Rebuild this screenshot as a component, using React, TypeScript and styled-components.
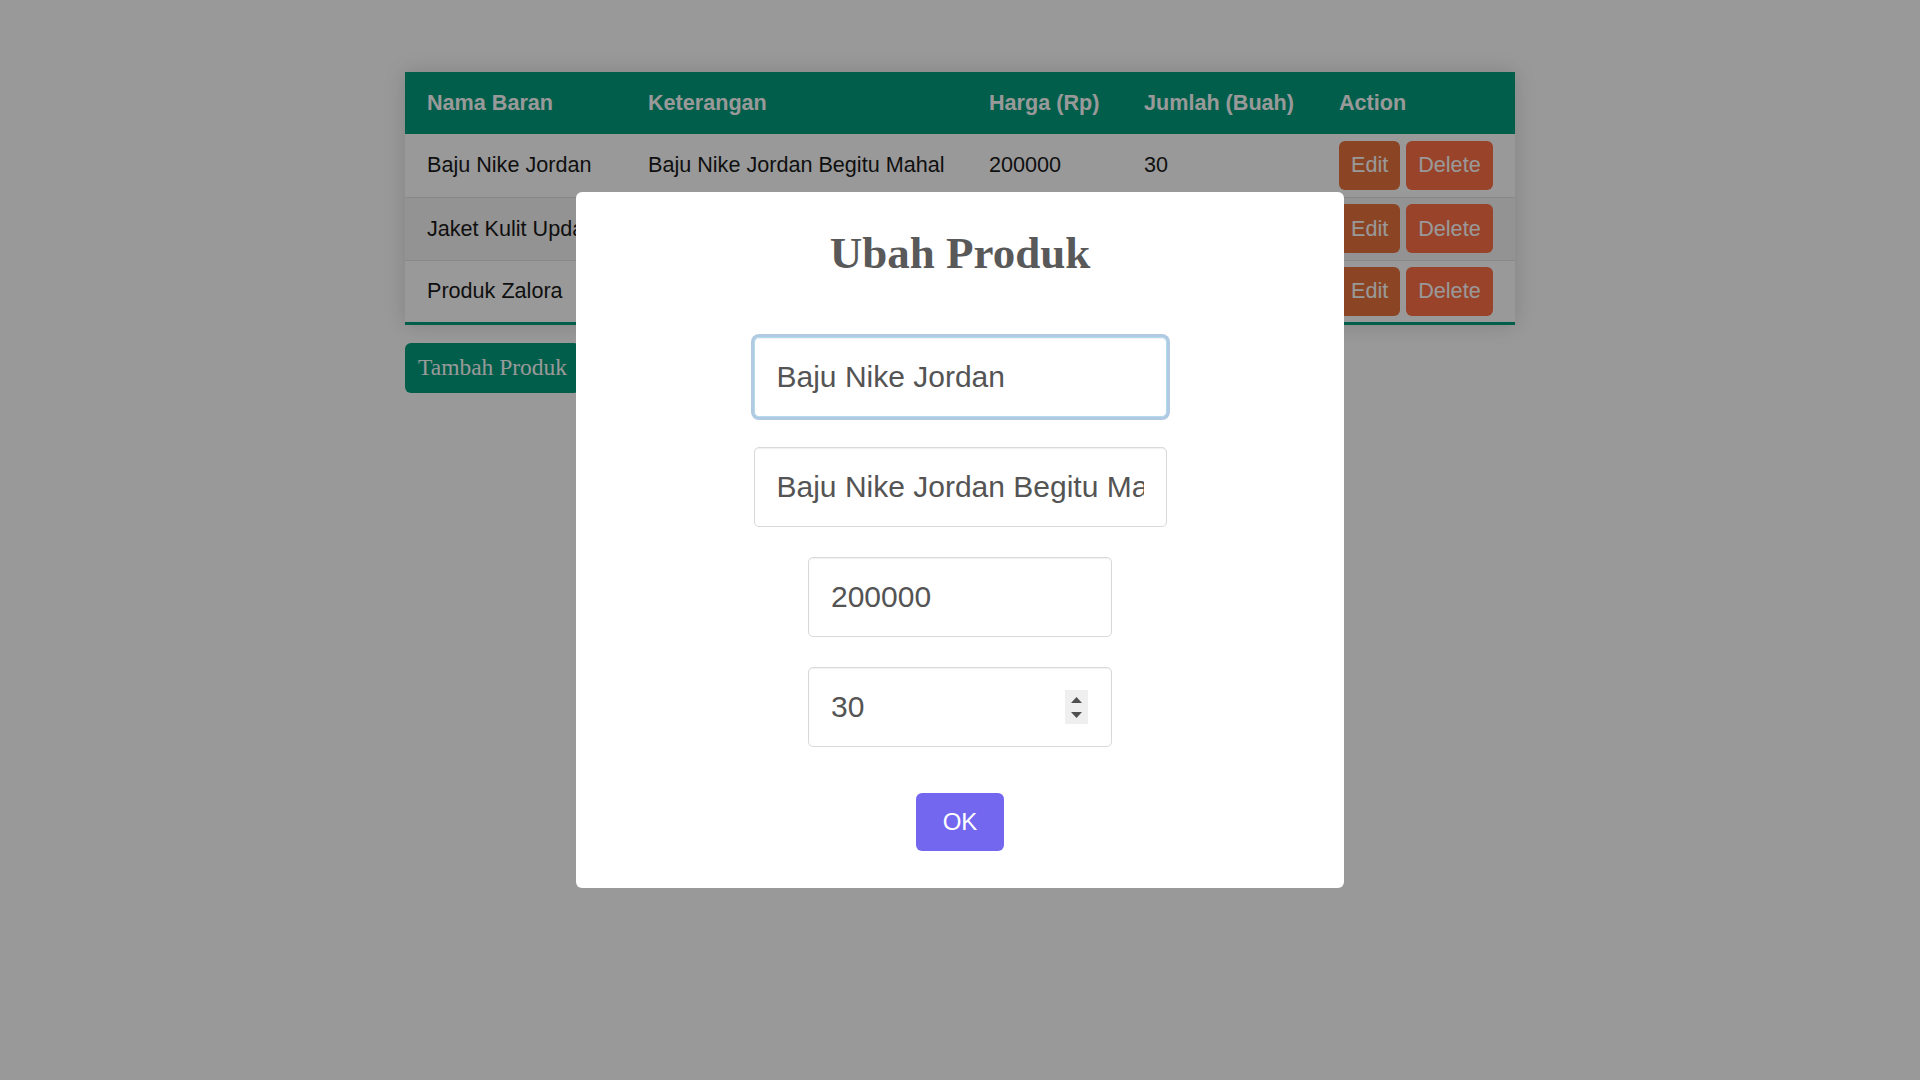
import React from "react";
import styled, { createGlobalStyle } from "styled-components";

const GlobalStyle = createGlobalStyle`
  html, body { margin: 0; padding: 0; background: #ffffff; }
  body { font-family: "Liberation Sans", Arial, sans-serif; }
  * { box-sizing: border-box; }
`;

const Page = styled.div`
  width: 1110px;
  margin: 0 auto;
  padding-top: 72px;
  display: flex;
  flex-direction: column;
  align-items: flex-start;
  gap: 18px;
`;

const Table = styled.table`
  width: 1110px;
  table-layout: fixed;
  border-collapse: collapse;
  box-shadow: 0 0 20px rgba(0, 0, 0, 0.15);
  border-bottom: 3px solid #009d7d;
  font-size: 21.6px;
`;

const HeadCell = styled.th`
  height: 62px;
  padding: 0 22px;
  background: #009d7d;
  color: #ffffff;
  font-weight: bold;
  text-align: left;
`;

const Row = styled.tr<{ $striped?: boolean }>`
  background: ${(p) => (p.$striped ? "#f5f5f5" : "#ffffff")};
  border-bottom: 1px solid #e3e3e3;
  &:last-child { border-bottom: none; }
`;

const Cell = styled.td`
  height: 63px;
  padding: 0 22px;
  color: #1a1a1a;
  white-space: nowrap;
  overflow: hidden;
`;

const Actions = styled.div`
  display: flex;
  gap: 6px;
`;

const ActionButton = styled.button<{ $tone: "edit" | "delete" }>`
  height: 49px;
  padding: 0 12px;
  border: none;
  border-radius: 6px;
  background: ${(p) => (p.$tone === "edit" ? "#e8733f" : "#ff7146")};
  color: #ffffff;
  font-family: "Liberation Sans", Arial, sans-serif;
  font-size: 21.6px;
`;

const AddButton = styled.button`
  height: 50px;
  padding: 0 13px;
  border: none;
  border-radius: 6px;
  background: #009d7d;
  color: #ffffff;
  font-family: "Liberation Serif", "Times New Roman", serif;
  font-size: 23.5px;
`;

const Overlay = styled.div`
  position: fixed;
  inset: 0;
  background: rgba(0, 0, 0, 0.4);
  display: flex;
  align-items: center;
  justify-content: center;
`;

const Modal = styled.div`
  width: 768px;
  background: #ffffff;
  border-radius: 6px;
  padding: 34px 0 37px;
  display: flex;
  flex-direction: column;
  align-items: center;
`;

const Title = styled.h2`
  margin: 0 0 57px;
  font-family: "Liberation Serif", "Times New Roman", serif;
  font-weight: bold;
  font-size: 45px;
  line-height: 54px;
  color: #595959;
`;

const Fields = styled.div`
  display: flex;
  flex-direction: column;
  align-items: center;
  gap: 30px;
`;

const FieldWrap = styled.div`
  position: relative;
`;

const Field = styled.input<{ $wide?: boolean; $focused?: boolean }>`
  display: block;
  width: ${(p) => (p.$wide ? "413px" : "304px")};
  height: 80px;
  padding: 0 22px;
  border: 1px solid ${(p) => (p.$focused ? "#b4dbed" : "#d9d9d9")};
  border-radius: 5px;
  box-shadow: ${(p) =>
    p.$focused
      ? "inset 0 1px 1px rgba(0,0,0,0.06), 0 0 0 3px rgba(100,150,200,0.5)"
      : "inset 0 1px 1px rgba(0,0,0,0.06)"};
  outline: none;
  background: #ffffff;
  color: #545454;
  font-family: "Liberation Sans", Arial, sans-serif;
  font-size: 30px;
`;

const Spinner = styled.div`
  position: absolute;
  top: 23px;
  right: 24px;
  width: 23px;
  height: 34px;
  background: #efefef;
  display: flex;
  flex-direction: column;
  align-items: center;
  justify-content: center;
  gap: 9px;
`;

const OkButton = styled.button`
  margin-top: 46px;
  height: 58px;
  width: 88px;
  border: none;
  border-radius: 6px;
  background: #7367f0;
  color: #ffffff;
  font-family: "Liberation Sans", Arial, sans-serif;
  font-size: 24px;
`;

const rows = [
  { nama: "Baju Nike Jordan", ket: "Baju Nike Jordan Begitu Mahal", harga: "200000", jumlah: "30" },
  { nama: "Jaket Kulit Update", ket: "Jaket Kulit Asli", harga: "350000", jumlah: "15" },
  { nama: "Produk Zalora", ket: "Produk Zalora Terbaru", harga: "150000", jumlah: "20" },
];

const widths = [221, 341, 155, 195, 198];

export default function App() {
  return (
    <>
      <GlobalStyle />
      <Page>
        <Table>
          <colgroup>
            {widths.map((w, i) => (
              <col key={i} style={{ width: w }} />
            ))}
          </colgroup>
          <thead>
            <tr>
              <HeadCell>Nama Baran</HeadCell>
              <HeadCell>Keterangan</HeadCell>
              <HeadCell>Harga (Rp)</HeadCell>
              <HeadCell>Jumlah (Buah)</HeadCell>
              <HeadCell>Action</HeadCell>
            </tr>
          </thead>
          <tbody>
            {rows.map((r, i) => (
              <Row key={i} $striped={i === 1}>
                <Cell>{r.nama}</Cell>
                <Cell>{r.ket}</Cell>
                <Cell>{r.harga}</Cell>
                <Cell>{r.jumlah}</Cell>
                <Cell>
                  <Actions>
                    <ActionButton $tone="edit">Edit</ActionButton>
                    <ActionButton $tone="delete">Delete</ActionButton>
                  </Actions>
                </Cell>
              </Row>
            ))}
          </tbody>
        </Table>
        <AddButton>Tambah Produk</AddButton>
      </Page>
      <Overlay>
        <Modal>
          <Title>Ubah Produk</Title>
          <Fields>
            <Field $wide $focused readOnly defaultValue="Baju Nike Jordan" />
            <Field $wide readOnly defaultValue="Baju Nike Jordan Begitu Mahal" />
            <Field readOnly defaultValue="200000" />
            <FieldWrap>
              <Field readOnly defaultValue="30" />
              <Spinner>
                <svg width="11" height="6" viewBox="0 0 11 6">
                  <path d="M0 6 L5.5 0 L11 6 Z" fill="#505050" />
                </svg>
                <svg width="11" height="6" viewBox="0 0 11 6">
                  <path d="M0 0 L11 0 L5.5 6 Z" fill="#505050" />
                </svg>
              </Spinner>
            </FieldWrap>
          </Fields>
          <OkButton>OK</OkButton>
        </Modal>
      </Overlay>
    </>
  );
}
